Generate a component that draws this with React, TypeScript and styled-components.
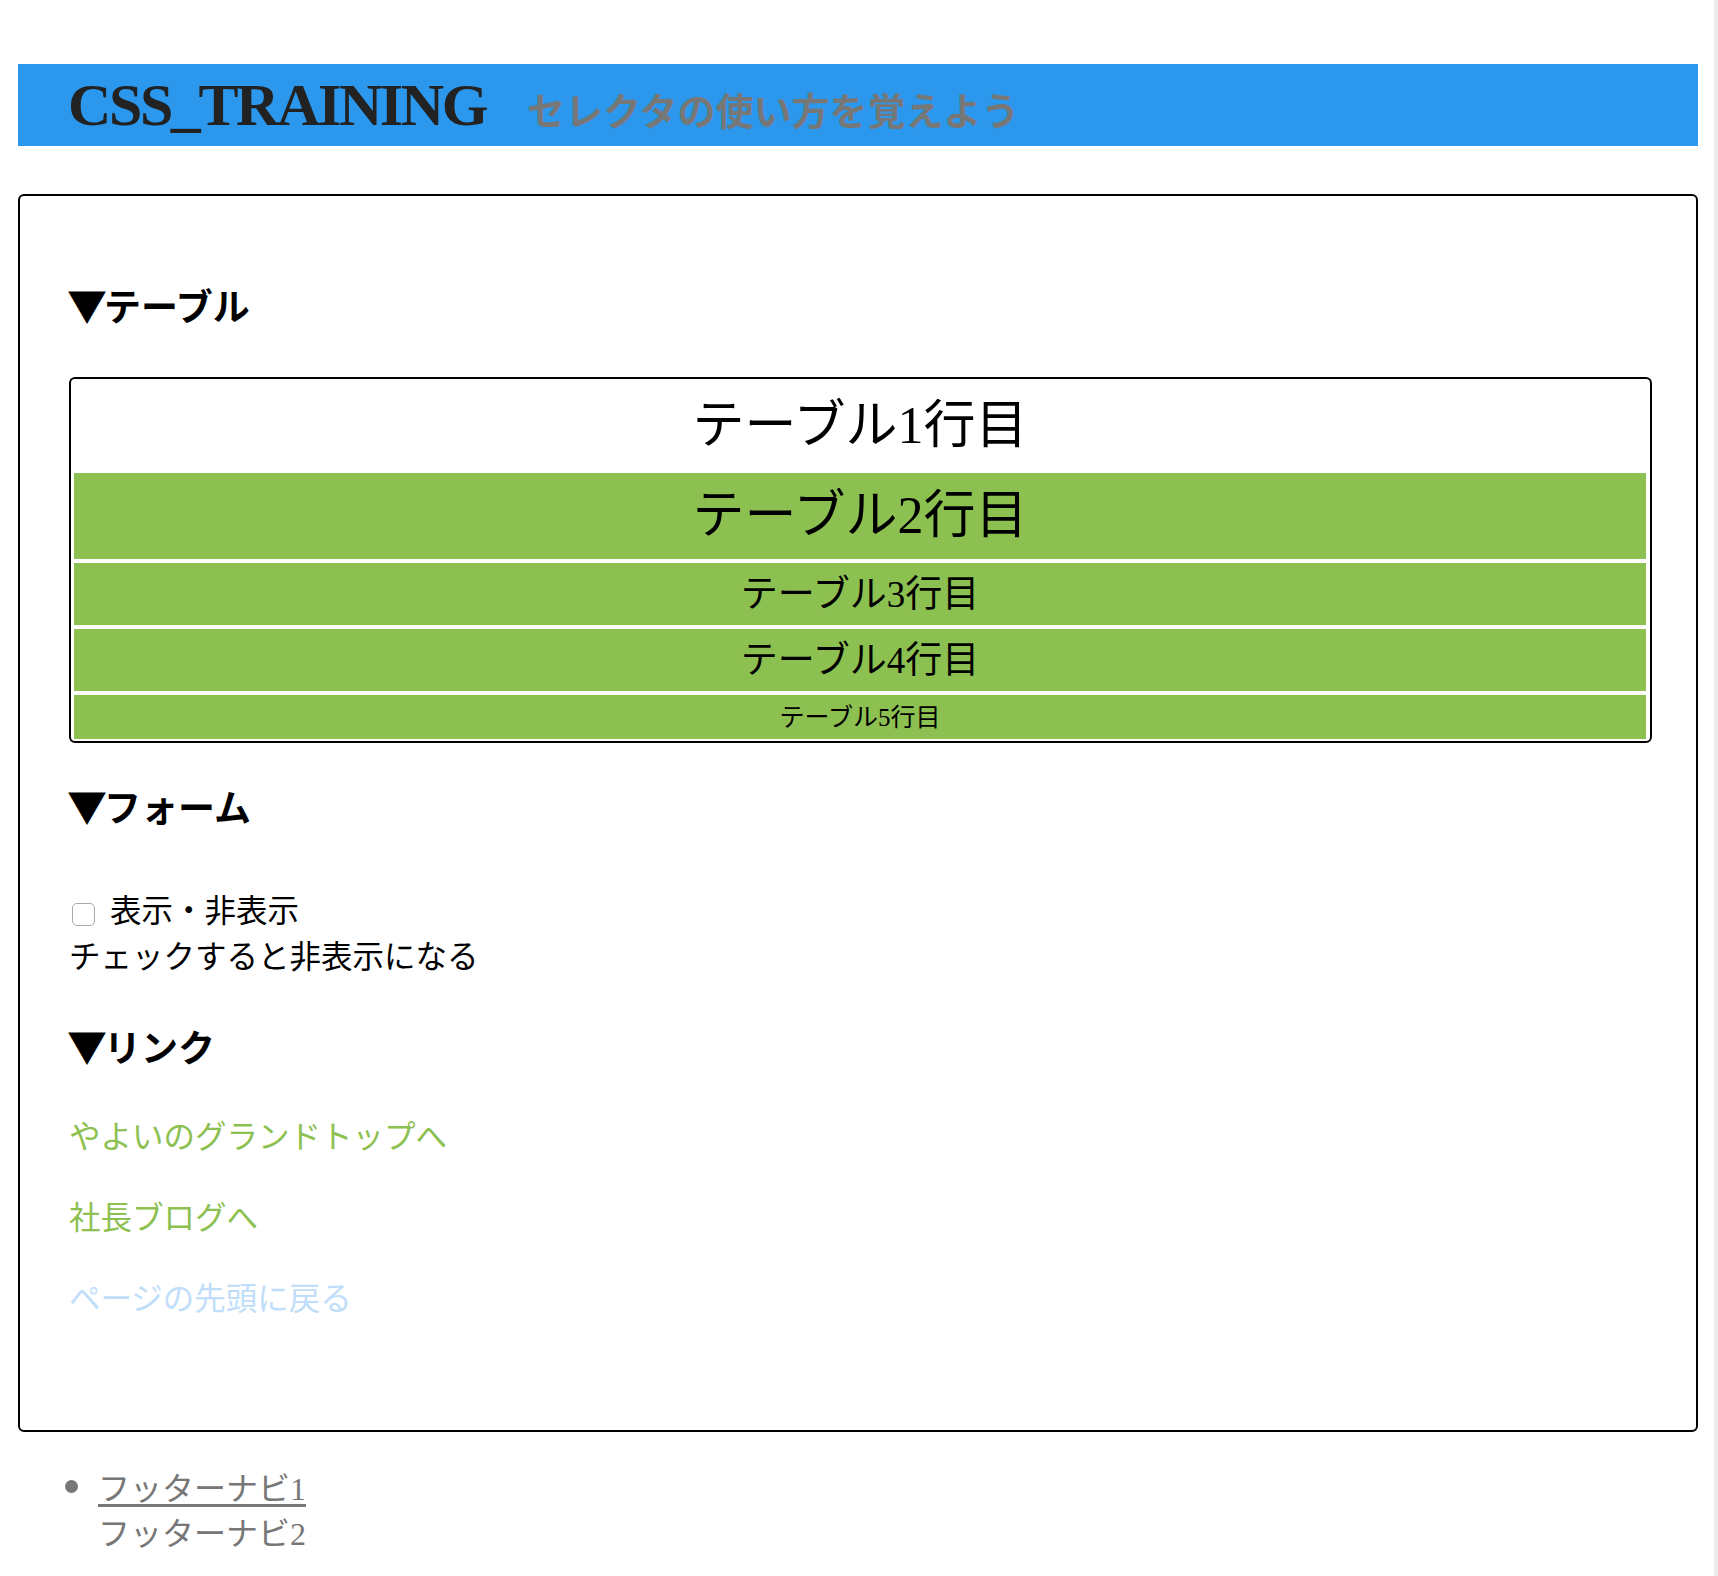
import React from 'react';
import styled, { createGlobalStyle } from 'styled-components';

const GlobalStyle = createGlobalStyle`
  html, body {
    margin: 0;
    padding: 0;
    background: #ffffff;
  }
  body {
    font-family: "Liberation Serif", "Noto Sans CJK JP", serif;
    color: #000000;
  }
  * { box-sizing: border-box; }
`;

const Page = styled.div`
  min-height: 1576px;
  padding: 64px 16px 0 18px;
  border-right: 4px solid #ebebeb;
`;

const Header = styled.header`
  height: 82px;
  background: #2b98ee;
  display: flex;
  align-items: baseline;
  padding: 11px 0 0 50px;
`;

const SiteTitle = styled.h1`
  margin: 0;
  font-size: 60px;
  line-height: 60px;
  font-weight: 700;
  letter-spacing: -2.4px;
  color: #222222;
`;

const Tagline = styled.p`
  margin: 0 0 0 41px;
  font-size: 38px;
  line-height: 60px;
  font-weight: 700;
  color: #777777;
`;

const Main = styled.main`
  margin-top: 48px;
  border: 2px solid #000000;
  border-radius: 6px;
  padding: 91px 44px 107px 49px;
`;

const SectionTitle = styled.h3<{ $gap: number }>`
  margin: ${(p) => p.$gap}px 0 0 0;
  font-size: 37px;
  line-height: 44px;
  height: 44px;
  font-weight: 700;
`;

const Triangle = styled.span`
  font-family: "Noto Sans CJK JP", sans-serif;
  font-size: 40px;
  line-height: 0;
  display: inline-block;
  margin-left: -2px;
  margin-right: -3px;
`;

const Table = styled.div`
  margin-top: 46px;
  border: 2px solid #000000;
  border-radius: 6px;
  padding: 4px 4px 2px 3px;
  display: flex;
  flex-direction: column;
  gap: 4px;
`;

const Row = styled.div<{ $size: number; $height: number; $green?: boolean }>`
  height: ${(p) => p.$height}px;
  display: flex;
  align-items: center;
  justify-content: center;
  font-size: ${(p) => p.$size}px;
  line-height: 1;
  background: ${(p) => (p.$green ? '#8cc050' : 'transparent')};
  color: #000000;
`;

const FormArea = styled.div`
  margin-top: 57px;
  font-size: 31.5px;
  line-height: 46px;
`;

const CheckLine = styled.label`
  display: flex;
  align-items: center;
  height: 46px;
`;

const Check = styled.input`
  appearance: none;
  -webkit-appearance: none;
  width: 23px;
  height: 23px;
  margin: 4px 15px 0 3px;
  border: 1.5px solid #a9a9a9;
  border-radius: 5px;
  background: #ffffff;
  flex: none;
`;

const Note = styled.div`
  height: 46px;
`;

const LinkLine = styled.p<{ $gap: number }>`
  margin: ${(p) => p.$gap}px 0 0 0;
  font-size: 31.5px;
  line-height: 46px;
`;

const TextLink = styled.a<{ $tone: 'green' | 'pale' }>`
  color: ${(p) => (p.$tone === 'green' ? '#8cc050' : '#c0defa')};
  text-decoration: none;
`;

const FooterNav = styled.ul`
  margin: 31px 0 0 0;
  padding: 0 0 0 80px;
  font-size: 32px;
  line-height: 45px;
  color: #777777;
`;

const FooterItem = styled.li<{ $plain?: boolean }>`
  list-style: ${(p) => (p.$plain ? 'none' : 'disc')};
  &::marker {
    font-size: 44px;
  }
`;

const FooterLink = styled.a`
  color: #777777;
  text-decoration: underline;
  text-underline-offset: 4px;
`;

const rows = [
  { label: 'テーブル1行目', size: 52, height: 86, green: false },
  { label: 'テーブル2行目', size: 52, height: 86, green: true },
  { label: 'テーブル3行目', size: 37, height: 62, green: true },
  { label: 'テーブル4行目', size: 37, height: 62, green: true },
  { label: 'テーブル5行目', size: 25, height: 44, green: true },
];

export default function App() {
  return (
    <>
      <GlobalStyle />
      <Page>
        <Header>
          <SiteTitle>CSS_TRAINING</SiteTitle>
          <Tagline>セレクタの使い方を覚えよう</Tagline>
        </Header>
        <Main>
          <SectionTitle $gap={0}>
            <Triangle>▼</Triangle>テーブル
          </SectionTitle>
          <Table>
            {rows.map((r) => (
              <Row key={r.label} $size={r.size} $height={r.height} $green={r.green}>
                {r.label}
              </Row>
            ))}
          </Table>

          <SectionTitle $gap={45}>
            <Triangle>▼</Triangle>フォーム
          </SectionTitle>
          <FormArea>
            <CheckLine>
              <Check type="checkbox" />
              表示・非表示
            </CheckLine>
            <Note>チェックすると非表示になる</Note>
          </FormArea>

          <SectionTitle $gap={47}>
            <Triangle>▼</Triangle>リンク
          </SectionTitle>
          <LinkLine $gap={43}>
            <TextLink $tone="green" href="#">やよいのグランドトップへ</TextLink>
          </LinkLine>
          <LinkLine $gap={35}>
            <TextLink $tone="green" href="#">社長ブログへ</TextLink>
          </LinkLine>
          <LinkLine $gap={35}>
            <TextLink $tone="pale" href="#">ページの先頭に戻る</TextLink>
          </LinkLine>
        </Main>
        <FooterNav>
          <FooterItem>
            <FooterLink href="#">フッターナビ1</FooterLink>
          </FooterItem>
          <FooterItem $plain>フッターナビ2</FooterItem>
        </FooterNav>
      </Page>
    </>
  );
}
